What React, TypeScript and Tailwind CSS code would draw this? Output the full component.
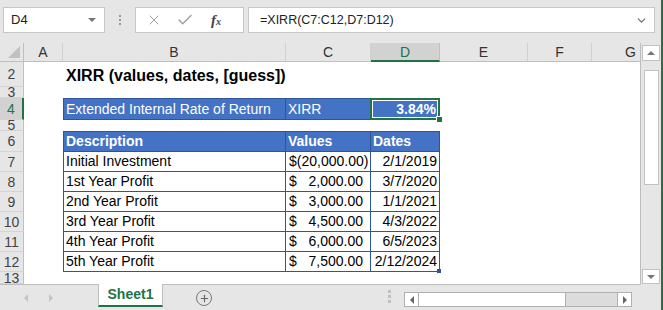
import { X, Check, ChevronDown, Plus } from "lucide-react";

const font = { fontFamily: '"Liberation Sans", Arial, sans-serif' };

const colHeads = [
    { label: "A", w: "w-[39px]" },
    { label: "B", w: "w-[223px]" },
    { label: "C", w: "w-[85px]" },
    { label: "D", w: "w-[69px]" },
    { label: "E", w: "w-[88px]" },
    { label: "F", w: "w-[64px]" },
    { label: "G", w: "w-[48px]" },
];

const flows = [
    { desc: "Initial Investment", value: "(20,000.00)", date: "2/1/2019", neg: true },
    { desc: "1st Year Profit", value: "2,000.00", date: "3/7/2020" },
    { desc: "2nd Year Profit", value: "3,000.00", date: "1/1/2021" },
    { desc: "3rd Year Profit", value: "4,500.00", date: "4/3/2022" },
    { desc: "4th Year Profit", value: "6,000.00", date: "6/5/2023" },
    { desc: "5th Year Profit", value: "7,500.00", date: "2/12/2024" },
];

function RowHead({ n, h, active }: { n: string; h: string; active?: boolean }) {
    return (
        <div
            className={`${h} w-[24px] shrink-0 overflow-hidden flex items-center justify-center border-b border-[#d4d4d4] text-[14px] leading-none ${
                active
                    ? "bg-[#d2d2d2] text-[#217346] border-r-2 border-r-[#217346]"
                    : "bg-[#e6e6e6] text-[#444] border-r border-r-[#bfbfbf]"
            }`}
        >
            {n}
        </div>
    );
}

function Formula() {
    return (
        <div className="h-[43px] flex items-start pt-[7px] pl-[3px]">
            <div className="w-[102px] h-[26px] bg-white border border-[#c6c6c6] flex items-center justify-between pl-[7px] pr-[8px] text-[13px] text-[#222]">
                <span>D4</span>
                <span className="w-0 h-0 border-l-[4px] border-r-[4px] border-t-[4px] border-l-transparent border-r-transparent border-t-[#777]" />
            </div>
            <div className="w-[30px] h-[26px] flex flex-col items-center justify-center gap-[2px]">
                <span className="w-[2px] h-[2px] bg-[#999]" />
                <span className="w-[2px] h-[2px] bg-[#999]" />
                <span className="w-[2px] h-[2px] bg-[#999]" />
            </div>
            <div className="w-[109px] h-[26px] bg-white border border-[#c6c6c6] flex items-center pl-[10px] gap-[14px]">
                <X size={16} strokeWidth={1.5} className="text-[#a0a0a0]" />
                <Check size={18} strokeWidth={2} className="text-[#a0a0a0]" />
                <span
                    className="ml-[3px] text-[15px] italic font-bold text-[#444]"
                    style={{ fontFamily: '"Liberation Serif", serif' }}
                >
                    f<span className="text-[10px]">x</span>
                </span>
            </div>
            <div className="ml-[4px] w-[407px] h-[26px] bg-white border border-[#c6c6c6] flex items-center justify-between pl-[11px] pr-[6px] text-[12.5px] text-[#222]">
                <span>=XIRR(C7:C12,D7:D12)</span>
                <ChevronDown size={13} strokeWidth={2} className="text-[#666]" />
            </div>
        </div>
    );
}

function ColumnHeads() {
    return (
        <div className="h-[19px] flex">
            <div className="w-[24px] h-[19px] shrink-0 bg-[#e6e6e6] border-r border-b border-[#bfbfbf] relative">
                <div
                    className="absolute right-[3px] bottom-[3px] w-[12px] h-[12px] bg-[#c0c0c0]"
                    style={{ clipPath: "polygon(100% 0, 100% 100%, 0 100%)" }}
                />
            </div>
            {colHeads.map((c) => (
                <div
                    key={c.label}
                    className={`${c.w} h-[19px] shrink-0 flex items-center justify-center text-[14px] leading-none ${
                        c.label === "D"
                            ? "bg-[#d2d2d2] text-[#217346] border-b-2 border-[#217346] border-r border-r-[#bfbfbf]"
                            : "bg-[#e6e6e6] text-[#333] border-b border-[#bfbfbf] border-r border-r-[#d0d0d0]"
                    } ${c.label === "G" ? "justify-end pr-[4px] border-r-0" : ""}`}
                >
                    {c.label}
                </div>
            ))}
        </div>
    );
}

function Blank({ w, h }: { w: string; h: string }) {
    return <div className={`${w} ${h} shrink-0`} />;
}

function Sheet() {
    const tb = "border-[#2f5597]";
    return (
        <div className="w-[641px] bg-white border-r border-[#bdbdbd] text-[14px] text-black">
            <ColumnHeads />

            {/* row 2 - title */}
            <div className="flex">
                <RowHead n="2" h="h-[25px]" />
                <Blank w="w-[39px]" h="h-[25px]" />
                <div className="h-[25px] flex items-center pl-[3px] pt-[2px] text-[16px] font-bold whitespace-nowrap">
                    XIRR (values, dates, [guess])
                </div>
            </div>

            {/* row 3 */}
            <div className="flex">
                <RowHead n="3" h="h-[11px]" />
            </div>

            {/* row 4 */}
            <div className="flex">
                <RowHead n="4" h="h-[22px]" active />
                <Blank w="w-[39px]" h="h-[22px]" />
                <div className={`w-[223px] h-[22px] shrink-0 bg-[#4472c4] text-white border-l border-t border-b border-r ${tb} flex items-center pl-[2px] whitespace-nowrap`}>
                    Extended Internal Rate of Return
                </div>
                <div className={`w-[85px] h-[22px] shrink-0 bg-[#4472c4] text-white border-t border-b border-r ${tb} flex items-center pl-[2px]`}>
                    XIRR
                </div>
                <div className={`w-[69px] h-[22px] shrink-0 bg-[#4472c4] text-white border-t border-b border-r ${tb} relative`}>
                    <div className="absolute -left-[1px] -top-[1px] w-[70px] h-[22px] border-2 border-[#217346] flex items-center justify-end pr-[2px] font-bold">
                        <div className="absolute inset-0 border border-white" />
                        <span className="relative">3.84%</span>
                    </div>
                    <div className="absolute -right-[4px] -bottom-[4px] w-[7px] h-[7px] bg-[#217346] border border-white" />
                </div>
            </div>

            {/* row 5 */}
            <div className="flex">
                <RowHead n="5" h="h-[11px]" />
            </div>

            {/* row 6 - table header */}
            <div className="flex">
                <RowHead n="6" h="h-[21px]" />
                <Blank w="w-[39px]" h="h-[21px]" />
                <div className={`w-[223px] h-[21px] shrink-0 bg-[#4472c4] text-white font-bold border-l border-t border-b border-r ${tb} flex items-center pl-[2px]`}>
                    Description
                </div>
                <div className={`w-[85px] h-[21px] shrink-0 bg-[#4472c4] text-white font-bold border-t border-b border-r ${tb} flex items-center pl-[2px]`}>
                    Values
                </div>
                <div className={`w-[69px] h-[21px] shrink-0 bg-[#4472c4] text-white font-bold border-t border-b border-r ${tb} flex items-center pl-[2px]`}>
                    Dates
                </div>
            </div>

            {flows.map((f, i) => (
                <div className="flex" key={f.desc}>
                    <RowHead n={String(i + 7)} h="h-[20px]" />
                    <Blank w="w-[39px]" h="h-[20px]" />
                    <div className={`w-[223px] h-[20px] shrink-0 border-l border-b border-r ${tb} flex items-center pl-[2px] whitespace-nowrap`}>
                        {f.desc}
                    </div>
                    <div className={`w-[85px] h-[20px] shrink-0 border-b border-r ${tb} flex items-center justify-between pl-[3px] whitespace-nowrap ${f.neg ? "pr-[2px]" : "pr-[7px]"}`}>
                        <span>$</span>
                        <span>{f.value}</span>
                    </div>
                    <div className={`w-[69px] h-[20px] shrink-0 border-b border-r ${tb} flex items-center justify-end pr-[2px] relative`}>
                        {f.date}
                        {i === 5 && (
                            <span className="absolute -right-[2px] -bottom-[2px] w-[4px] h-[4px] bg-[#2f5597]" />
                        )}
                    </div>
                </div>
            ))}

            {/* row 13 */}
            <div className="flex border-b border-[#bdbdbd]">
                <RowHead n="13" h="h-[12px]" />
            </div>
        </div>
    );
}

function VScroll() {
    return (
        <div className="w-[20px] h-[241px] flex flex-col items-center pt-[2px] bg-[#e6e6e6]">
            <div className="w-[18px] h-[16px] bg-white border border-[#c2c2c2] flex items-center justify-center">
                <span className="w-0 h-0 border-l-[4px] border-r-[4px] border-b-[4px] border-l-transparent border-r-transparent border-b-[#777]" />
            </div>
            <div className="w-[15px] h-[115px] mt-[9px] bg-white border border-[#c2c2c2]" />
            <div className="flex-1" />
            <div className="w-[18px] h-[15px] bg-white border border-[#c2c2c2] flex items-center justify-center">
                <span className="w-0 h-0 border-l-[4px] border-r-[4px] border-t-[4px] border-l-transparent border-r-transparent border-t-[#777]" />
            </div>
        </div>
    );
}

function Tabs() {
    return (
        <div className="h-[26px] flex items-start bg-[#e6e6e6]">
            <div className="w-[98px] h-[26px] flex items-center pl-[24px] gap-[21px]">
                <span className="w-0 h-0 border-t-[4px] border-b-[4px] border-r-[4px] border-t-transparent border-b-transparent border-r-[#c4c4c4]" />
                <span className="w-0 h-0 border-t-[4px] border-b-[4px] border-l-[4px] border-t-transparent border-b-transparent border-l-[#c4c4c4]" />
            </div>
            <div className="w-[65px] h-[23px] bg-white border-l border-r border-[#bdbdbd] border-b-2 border-b-[#217346] -mt-[1px] flex items-center justify-center text-[14px] font-bold text-[#217346]">
                Sheet1
            </div>
            <div className="ml-[33px] mt-[5px] w-[16px] h-[16px] rounded-full border border-[#777] flex items-center justify-center">
                <Plus size={11} strokeWidth={2.5} className="text-[#666]" />
            </div>
            <div className="ml-[176px] mt-[5px] flex flex-col gap-[2px]">
                <span className="w-[3px] h-[3px] bg-[#c0c0c0]" />
                <span className="w-[3px] h-[3px] bg-[#c0c0c0]" />
                <span className="w-[3px] h-[3px] bg-[#c0c0c0]" />
            </div>
            <div className="ml-[13px] mt-[7px] w-[228px] h-[15px] bg-[#dcdcdc] border border-[#b0b0b0] flex">
                <div className="w-[14px] h-full bg-white border-r border-[#b0b0b0] flex items-center justify-center">
                    <span className="w-0 h-0 border-t-[4px] border-b-[4px] border-r-[4px] border-t-transparent border-b-transparent border-r-[#666]" />
                </div>
                <div className="w-[147px] h-full bg-white border-r border-[#b0b0b0]" />
                <div className="flex-1" />
                <div className="w-[14px] h-full bg-white border-l border-[#b0b0b0] flex items-center justify-center">
                    <span className="w-0 h-0 border-t-[4px] border-b-[4px] border-l-[4px] border-t-transparent border-b-transparent border-l-[#666]" />
                </div>
            </div>
        </div>
    );
}

export default function App() {
    return (
        <div className="w-[663px] h-[310px] overflow-hidden bg-[#e6e6e6] border-r-2 border-[#217346]" style={font}>
            <Formula />
            <div className="flex">
                <Sheet />
                <VScroll />
            </div>
            <Tabs />
        </div>
    );
}
